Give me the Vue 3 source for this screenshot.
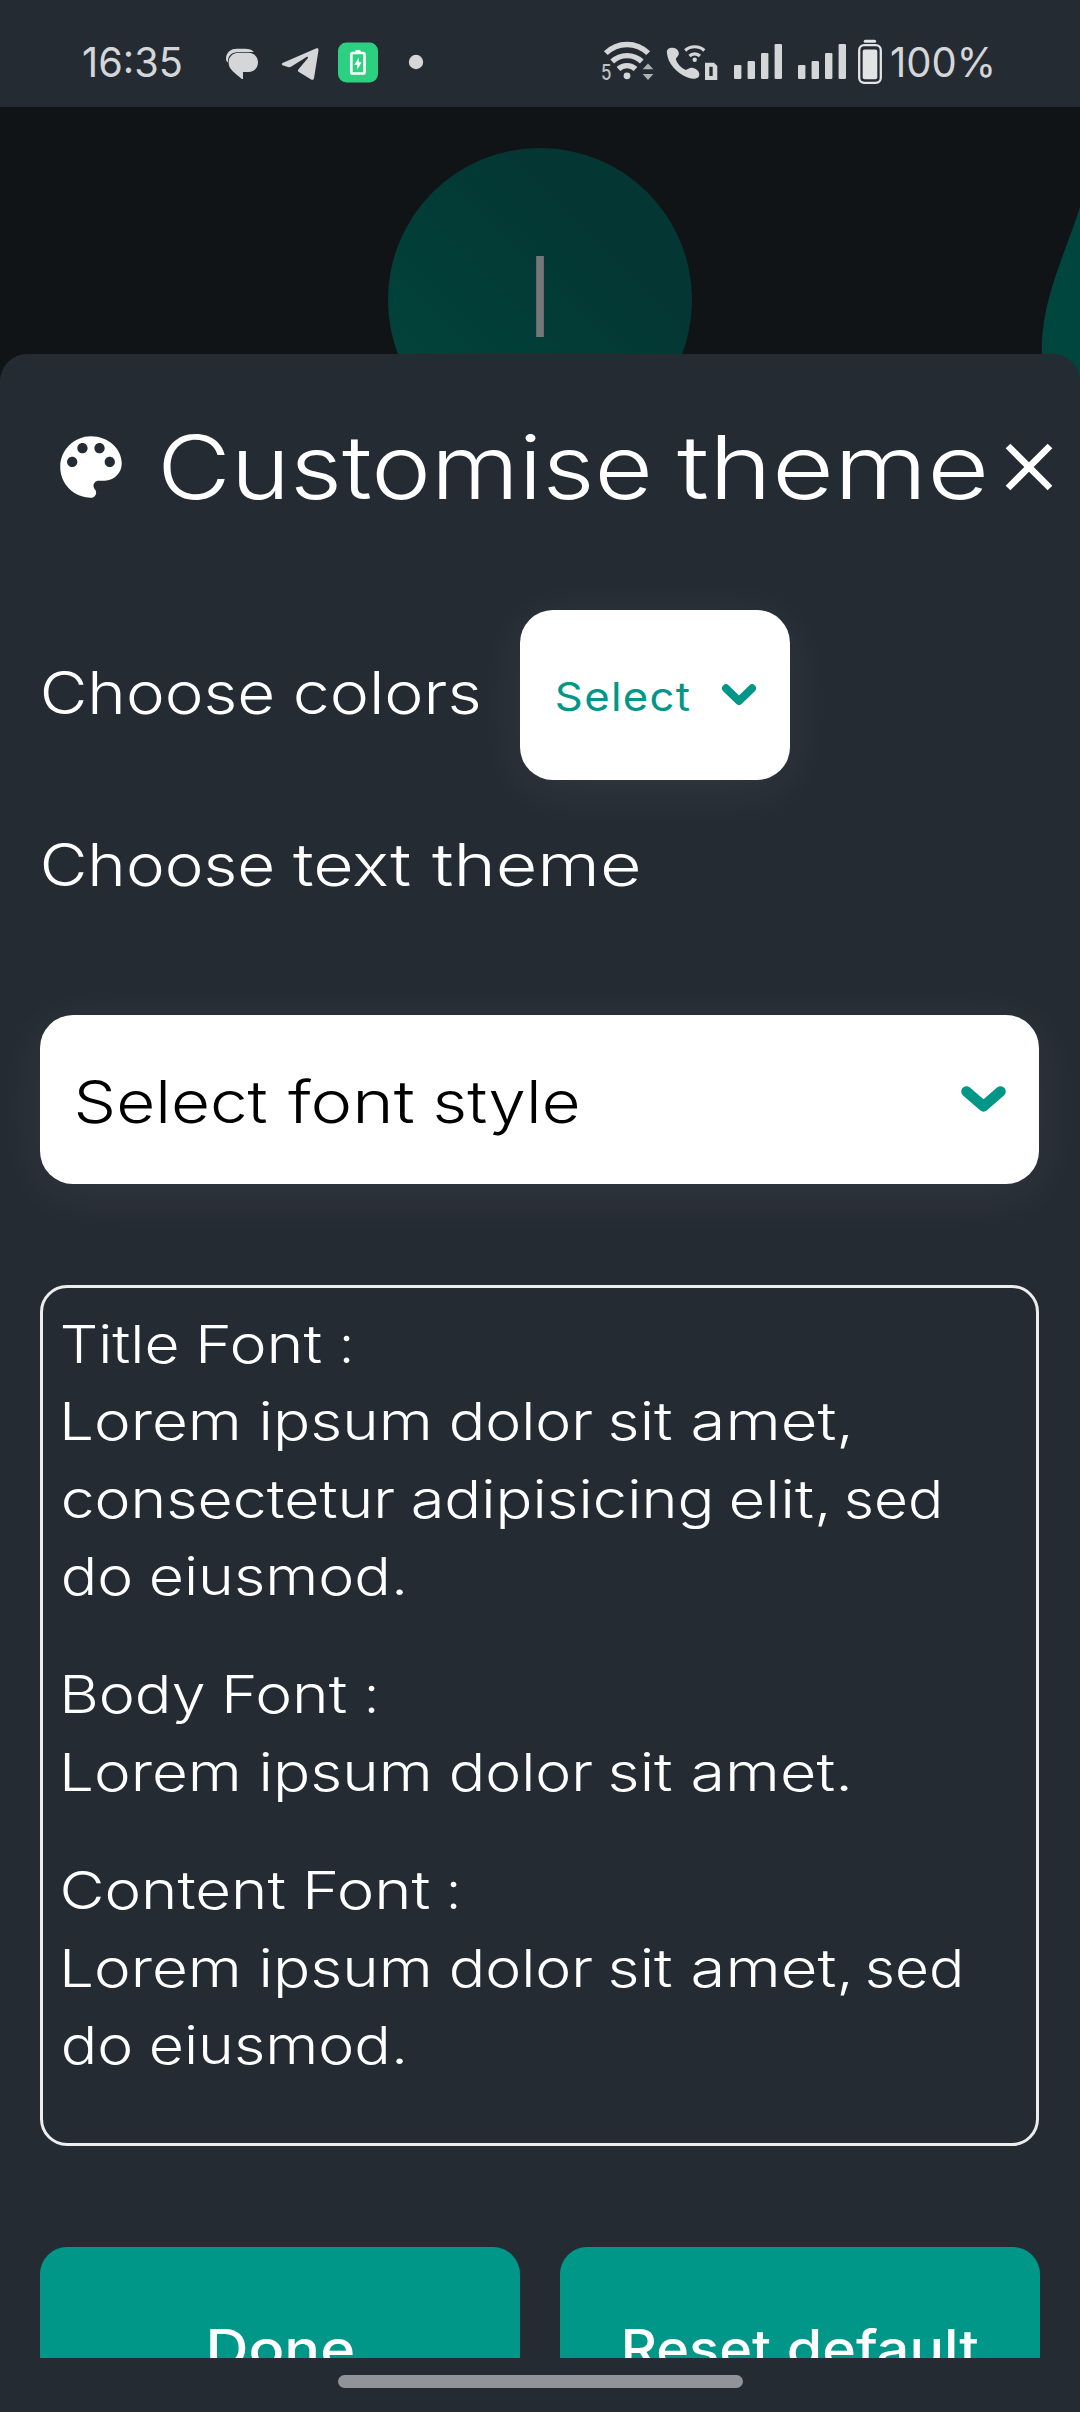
<script setup>
// Splits a line into words; spans lists the left and right edge of each one.
function words(origin, text, spans) {
  let edge = origin
  return text.split(' ').map((word, i) => {
    const [left, right] = spans[i]
    const item = { text: word + ' ', gap: left - edge, width: right - left }
    edge = right
    return item
  })
}

const heading = words(163, 'Customise theme', [[163, 648.2], [677.2, 984.6]])
const colorsLabel = words(43, 'Choose colors', [[43.4, 273.2], [295.7, 478.5]])
const themeLabel = words(43, 'Choose text theme', [[43.4, 273.2], [293.5, 410.8], [431.7, 638.5]])
const fontLabel = words(77, 'Select font style', [[77, 267], [288, 414], [436, 578]])
const doneLabel = words(210, 'Done', [[210, 353.4]])
const resetLabel = words(624.5, 'Reset default', [[624.7, 770], [789, 978]])

const lorem = [[64.7, 237.6], [261.7, 428.4], [451, 592.3], [610, 672], [693, 848.5]]
const previews = [
  {
    id: 'title',
    lines: [
      words(62, 'Title Font :', [[62, 177], [201, 321.6], [343, 350.2]]),
      words(62, 'Lorem ipsum dolor sit amet,', lorem),
      words(62, 'consectetur adipisicing elit, sed', [[62.7, 394], [413, 709.4], [731.4, 826.5], [846.4, 938.7]]),
      words(62, 'do eiusmod.', [[62.7, 129.5], [150.8, 403.6]]),
    ],
  },
  {
    id: 'body',
    lines: [
      words(62, 'Body Font :', [[65, 204.5], [227.3, 347], [368.3, 375.5]]),
      words(62, 'Lorem ipsum dolor sit amet.', lorem),
    ],
  },
  {
    id: 'content',
    lines: [
      words(62, 'Content Font :', [[62.7, 285], [307.9, 429.8], [450, 457.2]]),
      words(62, 'Lorem ipsum dolor sit amet, sed', [...lorem, [867, 959.4]]),
      words(62, 'do eiusmod.', [[62.7, 129.5], [150.8, 403.6]]),
    ],
  },
]

const bars = [
  { x: 0, y: 65 },
  { x: 13.6, y: 61 },
  { x: 27, y: 53 },
  { x: 40.6, y: 44 },
]

// Stretches a word so that its visible glyphs span the given width.
const vFit = {
  mounted(el, { value }) {
    const cs = getComputedStyle(el)
    const ctx = document.createElement('canvas').getContext('2d')
    ctx.font = `${cs.fontWeight} ${cs.fontSize} ${cs.fontFamily}`
    const text = el.textContent.trim()
    const m = ctx.measureText(text)
    const spacing = (parseFloat(cs.letterSpacing) || 0) * (text.length - 1)
    const ink = m.actualBoundingBoxLeft + m.actualBoundingBoxRight + spacing
    const scale = value.width / ink
    el.style.width = `${value.width}px`
    el.style.marginLeft = `${value.gap || 0}px`
    el.style.transform = `translateX(${m.actualBoundingBoxLeft * scale}px) scaleX(${scale})`
  },
}
</script>

<template>
  <div class="screen">
    <header class="status">
      <div class="clock"><span v-fit="{ width: 98 }" class="fit">16:35</span></div>
      <svg class="notif" viewBox="220 32 205 60" width="205" height="60">
        <g fill="#d5d6d8">
          <path d="M226 59C226 52 231 48.800 237 48.800H245C249 48.800 252 49.800 253.800 52H239C231.500 52 227.800 56 227.800 62.500C226.600 61.500 226 60.500 226 59Z" />
          <path d="M238.500 52.800H248.500C254 52.800 258 57 258 62.300C258 67.800 254 72 248.500 72H243V79H241.800C236 73.500 228.600 70 228.600 62.500C228.600 57 233 52.800 238.500 52.800Z" />
          <path d="M282.500 63L316.500 48.300Q318.800 47.600 318.500 50.200L314 78.300Q313.500 80.500 311.200 79.500L298.500 71.800Q297.200 70.800 298.300 69.500L308 58Q308.300 56.300 306.500 57L291 66.700Q289.500 67.500 288 67L282.500 65.200Q280.800 64 282.500 63Z" />
          <circle cx="416" cy="62" r="7.200" />
        </g>
        <rect x="338" y="42.500" width="40" height="40" rx="8.500" fill="#2bd180" />
        <rect x="351.300" y="53" width="13.200" height="20.500" rx="1.500" fill="none" stroke="#fff" stroke-width="2.700" />
        <path d="M355.300 52.500V51.200Q355.300 50 356.500 50H359.500Q360.700 50 360.700 51.200V52.500Z" fill="#fff" />
        <path d="M358.800 57.500L354.300 64.700H357.200V69.500L361.700 62.200H358.800Z" fill="#fff" />
      </svg>
      <svg class="radio" viewBox="595 32 290 60" width="290" height="60">
        <text x="601" y="80" class="band" textLength="10.500" lengthAdjust="spacingAndGlyphs">5</text>
        <g fill="none" stroke="#d5d6d8" stroke-width="5.400">
          <path d="M605.800 53.200A30 30 0 0 1 648.200 53.200" />
          <path d="M612.200 61.500A21.500 21.500 0 0 1 641.800 61.500" />
          <path d="M618.500 69A12.500 12.500 0 0 1 635.500 69" />
          <path d="M685.200 50.500A14 14 0 0 1 704.300 50.500" stroke-width="3.200" />
          <path d="M689.500 56A7.500 7.500 0 0 1 699.900 56" stroke-width="3.200" />
        </g>
        <g fill="#d5d6d8">
          <circle cx="627" cy="75.800" r="3.400" />
          <circle cx="694.700" cy="59.700" r="2.200" />
          <path d="M666.800 52C666.800 46.800 677 46 678.800 52.500C679.300 56 676.500 57 675.800 59C677 63.500 681.500 68.500 686 70C688 69.500 689.500 67.300 693 68C700 69.500 700.500 76 698 77.500C695 79.500 690 78.800 687 77.300C677 72.800 667.500 64 666.800 52Z" />
          <path fill-rule="evenodd" d="M705 62.700H714L717.300 66V80H705ZM709.300 66.700V76H712.700V66.700Z" />
        </g>
        <path d="M642.700 69.300L648 63.500L653.300 69.300ZM642.700 74L648 80L653.300 74Z" fill="#aeb1b4" />
        <g v-for="start in [734, 798]" :key="start" fill="#d5d6d8">
          <rect v-for="bar in bars" :key="bar.x" :x="start + bar.x" :y="bar.y" width="7.400" :height="79 - bar.y" rx="1.200" />
        </g>
        <rect x="859.200" y="45.200" width="21.600" height="37.600" rx="5" fill="none" stroke="#e2e3e4" stroke-width="2.300" />
        <rect x="862.700" y="49.500" width="14.600" height="29.800" rx="2" fill="#e2e3e4" />
        <rect x="863.700" y="39.800" width="12.400" height="3" rx="1.500" fill="#e2e3e4" />
      </svg>
      <div class="percent"><span v-fit="{ width: 101 }" class="fit">100%</span></div>
    </header>

    <main class="app">
      <section class="backdrop">
        <div class="avatar"><span class="initial">I</span></div>
        <svg class="blob" viewBox="1040 200 40 190" width="40" height="190">
          <path d="M1080 207C1071 236 1056 270 1049 298C1044 316 1041 338 1042 356L1046 390H1080Z" fill="#00463e" />
        </svg>
      </section>

      <section class="sheet">
        <div class="heading">
          <svg viewBox="0 0 24 24" width="82" height="82">
            <path fill="#fff" fill-rule="evenodd" d="M12 3c-4.970 0-9 4.030-9 9s4.030 9 9 9c.830 0 1.500-.670 1.500-1.500 0-.390-.150-.740-.390-1.010-.230-.260-.380-.610-.380-.990 0-.830.670-1.500 1.500-1.500H16c2.760 0 5-2.240 5-5 0-4.420-4.030-8-9-8zm-5.500 9c-.830 0-1.500-.670-1.500-1.500S5.670 9 6.500 9 8 9.670 8 10.500 7.330 12 6.500 12zm3-4C8.670 8 8 7.330 8 6.500S8.670 5 9.500 5s1.500.670 1.500 1.500S10.330 8 9.500 8zm5 0c-.830 0-1.500-.670-1.500-1.500S13.670 5 14.500 5s1.500.670 1.500 1.500S15.330 8 14.500 8zm3 4c-.830 0-1.500-.670-1.500-1.500S16.670 9 17.500 9s1.500.670 1.500 1.500-.670 1.500-1.500 1.500z" />
          </svg>
          <h1 class="line">
            <span v-for="w in heading" :key="w.text" v-fit="w" class="fit">{{ w.text }}</span>
          </h1>
          <svg viewBox="0 0 24 24" width="80" height="80">
            <path fill="#fff" d="M19 6.410L17.590 5 12 10.590 6.410 5 5 6.410 10.590 12 5 17.590 6.410 19 12 13.410 17.590 19 19 17.590 13.410 12z" />
          </svg>
        </div>

        <div class="colors">
          <div class="line label">
            <span v-for="w in colorsLabel" :key="w.text" v-fit="w" class="fit">{{ w.text }}</span>
          </div>
          <button class="select small">
            <span class="line"><span v-fit="{ width: 133 }" class="fit">Select</span></span>
            <svg viewBox="0 0 34 22" width="34" height="22"><path d="M4 4.300L17 17L30 4.300" /></svg>
          </button>
        </div>

        <div class="line label text-theme">
          <span v-for="w in themeLabel" :key="w.text" v-fit="w" class="fit">{{ w.text }}</span>
        </div>

        <button class="select large">
          <span class="line">
            <span v-for="w in fontLabel" :key="w.text" v-fit="w" class="fit">{{ w.text }}</span>
          </span>
          <svg viewBox="0 0 45 26" width="45" height="26"><path d="M5.500 5.500L22.500 20.200L39.500 5.500" /></svg>
        </button>

        <div class="preview">
          <div v-for="block in previews" :key="block.id" class="block">
            <div v-for="(line, i) in block.lines" :key="i" class="line">
              <span v-for="w in line" :key="w.text" v-fit="w" class="fit">{{ w.text }}</span>
            </div>
          </div>
        </div>

        <div class="actions">
          <button class="done">
            <span v-for="w in doneLabel" :key="w.text" v-fit="w" class="fit">{{ w.text }}</span>
          </button>
          <button class="reset">
            <span v-for="w in resetLabel" :key="w.text" v-fit="w" class="fit">{{ w.text }}</span>
          </button>
        </div>
      </section>
    </main>

    <footer class="nav"><div class="pill"></div></footer>
  </div>
</template>

<style>
body {
  margin: 0;
  background: #252b33;
}
</style>

<style scoped>
.screen {
  display: flex;
  flex-direction: column;
  width: 1080px;
  height: 2412px;
  overflow: hidden;
  background: #252b33;
  color: #fff;
  font-family: Inter, "Open Sans", sans-serif;
}
.line {
  display: flex;
}
.fit {
  flex: none;
  display: block;
  transform-origin: 0 50%;
  white-space: pre;
  text-align: left;
}
button {
  display: flex;
  align-items: center;
  border: 0;
  padding: 0;
  font-family: inherit;
}
svg {
  display: block;
  flex: none;
}
.status {
  display: flex;
  align-items: flex-start;
  height: 107px;
  padding: 17px 0 0 83px;
  box-sizing: border-box;
  color: #d5d6d8;
  font-size: 41px;
  line-height: 60px;
}
.clock {
  width: 137px;
  margin-top: 15px;
}
.notif {
  margin: 15px 170px 0 0;
}
.radio {
  margin-top: 15px;
}
.percent {
  margin: 15px 0 0 6px;
}
.band {
  fill: #bfc1c4;
  font: 500 21px Inter, sans-serif;
}
.app {
  flex: none;
  height: 2251px;
  overflow: hidden;
  background: #111417;
}
.backdrop {
  position: relative;
  display: flex;
  justify-content: center;
  height: 247px;
  padding-top: 41px;
  box-sizing: border-box;
}
.avatar {
  flex: none;
  display: flex;
  align-items: center;
  justify-content: center;
  width: 304px;
  height: 304px;
  border-radius: 50%;
  background: linear-gradient(45deg, #00463d, #043633 75%);
}
.initial {
  color: #787777;
  font-size: 111px;
  font-weight: 300;
  line-height: 120px;
  margin-top: -6px;
}
.blob {
  position: absolute;
  right: 0;
  top: 93px;
}
.sheet {
  position: relative;
  height: 2004px;
  border-radius: 27px 27px 0 0;
  background: #252b33;
}
.heading {
  display: flex;
  align-items: center;
  height: 226px;
  padding-left: 50px;
}
h1 {
  width: 826px;
  margin: 0 0 0 31px;
  font-size: 88px;
  font-weight: 300;
  line-height: 120px;
}
.colors {
  display: flex;
  align-items: center;
  margin-top: 30px;
  padding-left: 43px;
}
.label {
  font-size: 59px;
  font-weight: 350;
  line-height: 80px;
}
.colors .label {
  width: 477px;
  margin-top: -4px;
}
.select {
  height: 169.500px;
  border-radius: 33px;
  background: #fff;
  box-shadow: 0 9px 56px rgba(255, 255, 255, 0.065);
  font-weight: 350;
}
.select path {
  fill: none;
  stroke: #009788;
  stroke-width: 8;
  stroke-linecap: round;
  stroke-linejoin: round;
}
.select.large path {
  stroke-width: 10.500;
}
.small {
  width: 270px;
  padding-left: 36.500px;
  color: #009788;
  font-size: 40px;
  font-weight: 400;
}
.small .line {
  width: 165.500px;
  margin-top: 4px;
}
.small .fit {
  letter-spacing: 0.03em;
}
.text-theme {
  margin: 45px 0 0 43px;
}
.large {
  width: 999px;
  margin: 110px 0 0 40px;
  padding: 0 33px 0 37px;
  justify-content: space-between;
  color: #000;
  font-size: 59px;
}
.large .line {
  margin-top: 5px;
}
.preview {
  width: 999px;
  height: 861.500px;
  margin: 100.500px 0 0 40px;
  padding: 18px 0 0 19px;
  box-sizing: border-box;
  border: 3px solid #ededee;
  border-radius: 27px;
  font-size: 52px;
  font-weight: 350;
  line-height: 77.600px;
}
.preview .line {
  height: 77.600px;
}
.block + .block {
  margin-top: 40.500px;
}
.actions {
  display: flex;
  gap: 40px;
  margin-top: 100.500px;
  padding: 0 40px;
}
.actions button {
  flex: none;
  width: 480px;
  height: 204px;
  box-sizing: border-box;
  border-radius: 27px;
  background: #009788;
  color: #fff;
  font-size: 52px;
  font-weight: 500;
}
.done {
  padding-left: 170px;
}
.reset {
  padding-left: 64.500px;
}
.nav {
  display: flex;
  justify-content: center;
  padding-top: 17px;
}
.pill {
  width: 405px;
  height: 13px;
  border-radius: 6.500px;
  background: #909398;
}
</style>
